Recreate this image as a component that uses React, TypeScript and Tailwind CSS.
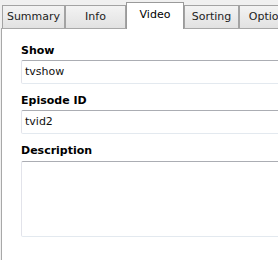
const tabs = [
  { label: 'Summary', w: 'w-[63px]' },
  { label: 'Info', w: 'w-[61px]' },
  { label: 'Video', w: 'w-[58px]', active: true },
  { label: 'Sorting', w: 'w-[55px]' },
  { label: 'Options', w: 'w-[62px]' },
]

function Field({ label, value }: { label: string; value: string }) {
  return (
    <div className="flex flex-col">
      <label className="h-[14px] leading-[14px] font-bold text-black">{label}</label>
      <div className="mt-[2px] flex h-[24px] items-center rounded-[2px] border border-[#e3e9ef] border-t-[#abadb3] border-l-[#e2e3ea] bg-white pl-[3px] text-[#111]">
        {value}
      </div>
    </div>
  )
}

export default function App() {
  return (
    <div className="h-[260px] w-[278px] overflow-hidden bg-[#f0f0f0] font-['DejaVu_Sans',sans-serif] text-[11px]">
      <div className="relative z-10 flex h-[29px] items-end pl-[2px]">
        {tabs.map((t) =>
          t.active ? (
            <div
              key={t.label}
              className={`${t.w} flex h-[27px] shrink-0 items-center justify-center border-x border-t border-[#9a9a9a] bg-white pb-[2px] text-black`}
            >
              {t.label}
            </div>
          ) : (
            <div
              key={t.label}
              className={`${t.w} mb-px flex h-[23px] shrink-0 items-center justify-center border-x border-t border-[#a3a3a3] bg-gradient-to-b from-[#f3f3f3] to-[#e2e2e2] text-[#222]`}
            >
              {t.label}
            </div>
          ),
        )}
      </div>
      <div className="-mt-px ml-px flex h-[240px] w-[330px] flex-col gap-[10px] border border-[#a8a8a8] bg-white pt-[15px] pl-[19px] pr-[20px]">
        <Field label="Show" value="tvshow" />
        <Field label="Episode ID" value="tvid2" />
        <div className="flex flex-col">
          <label className="h-[14px] leading-[14px] font-bold text-black">Description</label>
          <div className="mt-[3px] h-[76px] rounded-[2px] border border-[#e3e9ef] border-t-[#abadb3] border-l-[#e2e3ea] bg-white" />
        </div>
      </div>
    </div>
  )
}
